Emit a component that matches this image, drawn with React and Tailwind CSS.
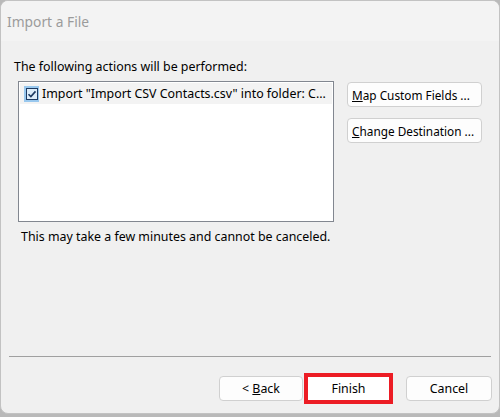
export default function App() {
  const font = { fontFamily: '"Noto Sans", "Segoe UI", sans-serif' }
  return (
    <div className="w-[500px] h-[417px] bg-[#b9b9b9]" style={font}>
      <div className="h-[414px] flex flex-col bg-[#f0f0f0] border border-[#c2c2c2] rounded-lg overflow-hidden text-[12.4px] leading-[16px] text-black">
        {/* Title bar */}
        <div className="h-[40px] bg-[#f3f3f3] pl-[6px] pt-[11px] text-[13.8px] leading-[20px] text-[#9b9b9b]">
          Import a File
        </div>

        {/* Body */}
        <div className="pl-[13px] pt-[18px]">The following actions will be performed:</div>

        <div className="flex pl-[17px] mt-[6px]">
          <div className="w-[316px] h-[141px] bg-white border border-[#828790] p-px">
            <div className="h-[21px] bg-[#f3f3f3] flex items-center pl-[4px] gap-[3px]">
              <span className="w-[15px] h-[16px] bg-[#99c8ee] flex items-center justify-center">
                <svg width="12" height="12" viewBox="0 0 12 12">
                  <rect x="0.5" y="0.5" width="11" height="11" fill="#dcecf9" stroke="#1d3a62" />
                  <path d="M2.5 6.2 L4.9 8.6 L9.5 3.4" fill="none" stroke="#1d3a62" strokeWidth="1.6" />
                </svg>
              </span>
              <span className="whitespace-nowrap">Import "Import CSV Contacts.csv" into folder: C...</span>
            </div>
          </div>

          <div className="flex flex-col gap-[11px] ml-[13px] mt-px text-[11.8px]">
            <button className="w-[135px] h-[25px] bg-[#fdfdfd] border border-[#d0d0d0] rounded-[4px] text-left pl-[4px] whitespace-nowrap">
              <span className="underline">M</span>ap Custom Fields ...
            </button>
            <button className="w-[135px] h-[25px] bg-[#fdfdfd] border border-[#d0d0d0] rounded-[4px] text-left pl-[4px] whitespace-nowrap">
              <span className="underline">C</span>hange Destination ...
            </button>
          </div>
        </div>

        <div className="pl-[20px] mt-[7px]">This may take a few minutes and cannot be canceled.</div>

        <div className="flex-1" />

        {/* Footer */}
        <div className="h-px bg-[#a0a0a0] mx-[8px]" />
        <div className="flex items-start justify-end pt-[16px] pb-[9px] pr-[7px]">
          <button className="w-[84px] h-[25px] mt-[3px] bg-[#fdfdfd] border border-[#d0d0d0] rounded-[4px]">
            &lt; <span className="underline">B</span>ack
          </button>
          <div className="ml-px w-[89px] h-[31px] border-4 border-[#ec1c24] bg-white flex items-center justify-center">
            Finish
          </div>
          <button className="ml-[13px] w-[86px] h-[25px] mt-[3px] bg-[#fdfdfd] border border-[#d0d0d0] rounded-[4px]">
            Cancel
          </button>
        </div>
      </div>
    </div>
  )
}
